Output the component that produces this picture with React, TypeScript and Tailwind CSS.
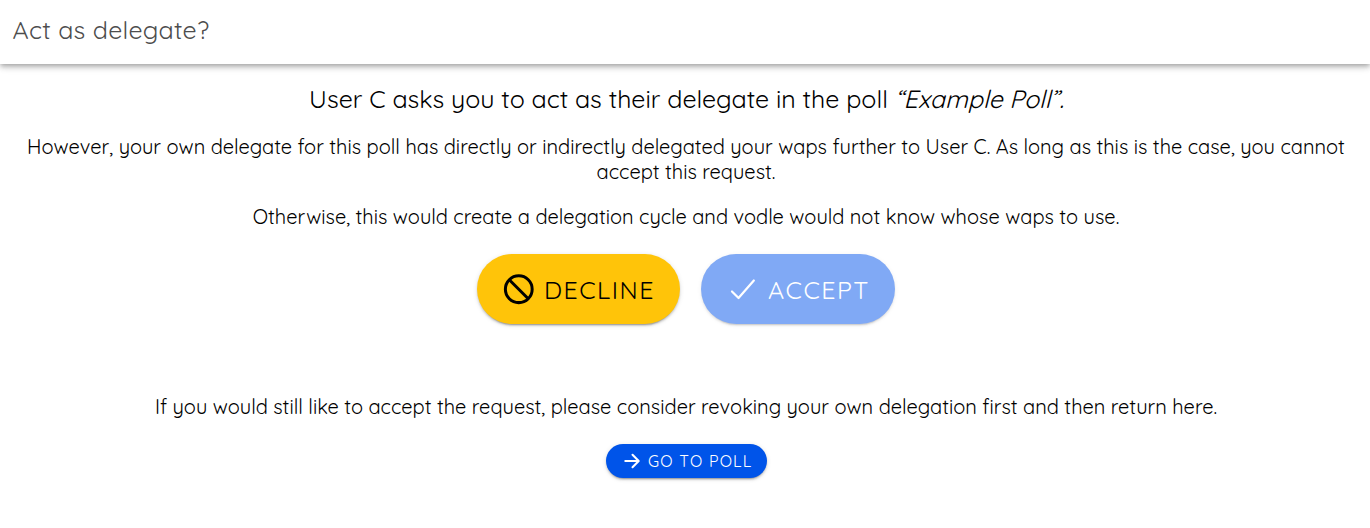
import React from "react";

function Line({ className, children }: { className: string; children: React.ReactNode }) {
  return <span className={`block w-max whitespace-nowrap ${className}`}>{children}</span>;
}

export default function App() {
  return (
    <div className="flex h-[528px] w-full flex-col overflow-hidden bg-white font-['Quicksand','Lato',sans-serif] text-black">
      <header className="flex h-16 shrink-0 items-center bg-white pb-[5px] pl-[12.5px] shadow-[0_2px_4px_-1px_rgba(0,0,0,0.2),0_4px_5px_0_rgba(0,0,0,0.14),0_1px_10px_0_rgba(0,0,0,0.12)]">
        <h1 className="text-[25px] leading-8 tracking-[0.3px] text-[#4d4d4d]">Act as delegate?</h1>
      </header>
      <main className="flex flex-col items-center pl-0.5 pt-[19px]">
        <Line className="ml-px text-[25px] leading-8">
          User C asks you to act as their delegate in the poll <em>“Example Poll”.</em>
        </Line>
        <div className="mt-[19px] flex flex-col items-center text-xl leading-[25px]">
          <Line className="">
            However, your own delegate for this poll has directly or indirectly delegated your waps further to User C. As long as this is the case, you cannot
          </Line>
          <Line className="">accept this request.</Line>
        </div>
        <Line className="mt-5 text-xl leading-[25px]">Otherwise, this would create a delegation cycle and vodle would not know whose waps to use.</Line>
        <div className="mt-[25px] flex gap-[21px]">
          <button className="flex h-[70px] w-[203px] items-center rounded-full bg-[#ffc409] pl-[24px] text-[25px] shadow-[0_3px_1px_-2px_rgba(0,0,0,0.2),0_2px_2px_0_rgba(0,0,0,0.14),0_1px_5px_0_rgba(0,0,0,0.12)]">
            <svg className="mr-[8px] size-[35px]" viewBox="0 0 512 512" fill="none" stroke="currentColor" strokeWidth="44">
              <circle cx="260" cy="252" r="196" />
              <path d="M121 113l278 278" />
            </svg>
            <span className="mt-0.5 tracking-[1.5px]">DECLINE</span>
          </button>
          <button className="flex h-[70px] w-[194px] items-center rounded-full bg-[#80a9f5] pl-[24px] text-[25px] text-white shadow-[0_3px_1px_-2px_rgba(0,0,0,0.1),0_2px_2px_0_rgba(0,0,0,0.07),0_1px_5px_0_rgba(0,0,0,0.06)]">
            <svg className="mr-[8px] size-[35px]" viewBox="0 0 512 512" fill="none" stroke="currentColor" strokeWidth="32" strokeLinecap="round" strokeLinejoin="round">
              <path d="M422 124L198 380l-96-96" />
            </svg>
            <span className="mt-0.5 tracking-[1.5px]">ACCEPT</span>
          </button>
        </div>
        <Line className="mt-[70px] text-xl leading-[25px]">If you would still like to accept the request, please consider revoking your own delegation first and then return here.</Line>
        <button className="mt-[25px] flex h-[34px] w-[161px] items-center rounded-full bg-[#0054e9] pl-[15px] text-base text-white shadow-[0_3px_1px_-2px_rgba(0,0,0,0.2),0_2px_2px_0_rgba(0,0,0,0.14),0_1px_5px_0_rgba(0,0,0,0.12)]">
          <svg className="mr-[5.5px] size-[22px]" viewBox="0 0 512 512" fill="none" stroke="currentColor" strokeWidth="48" strokeLinecap="round" strokeLinejoin="round">
            <path d="M268 112l144 144-144 144M392 256H100" />
          </svg>
          <span className="tracking-[1.2px]">GO TO POLL</span>
        </button>
      </main>
    </div>
  );
}
